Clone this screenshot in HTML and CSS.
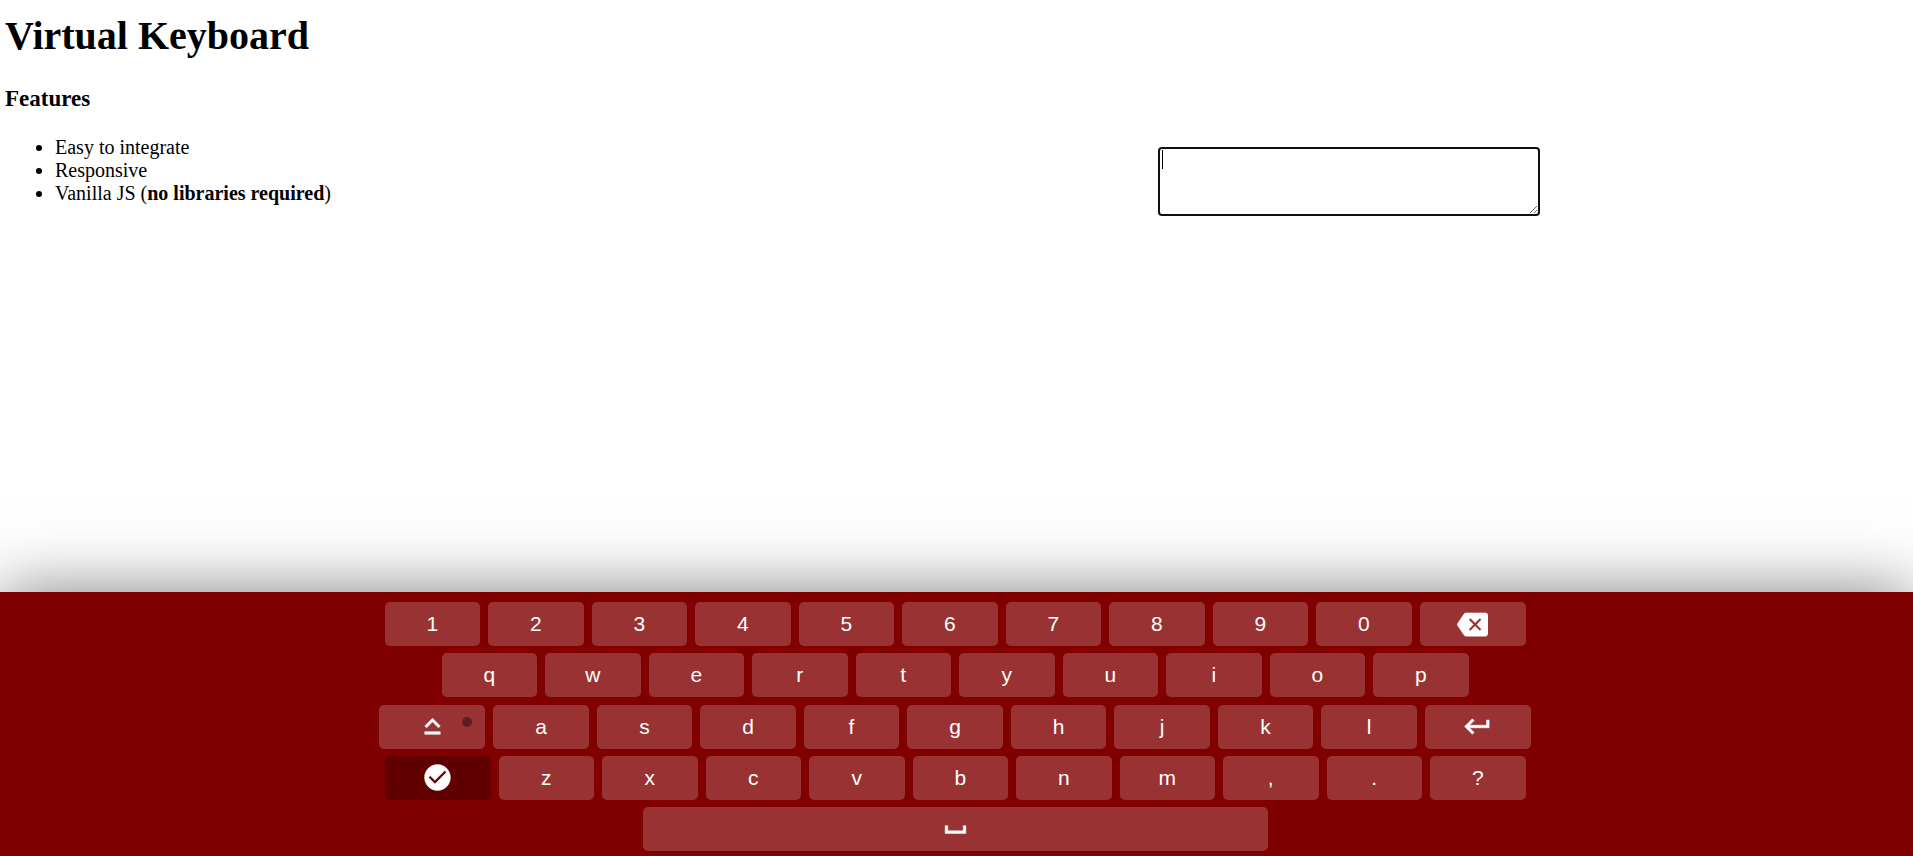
FILE: index.html
```html
<!DOCTYPE html>
<html lang="en">
<head>
<meta charset="utf-8">
<title>Virtual Keyboard</title>
<link rel="stylesheet" href="styles.css">
</head>
<body>
<header class="page-header">
  <h1 class="page-title">Virtual Keyboard</h1>
</header>
<main class="content">
  <section class="features">
    <h3 class="features-title">Features</h3>
    <ul class="features-list">
      <li>Easy to integrate</li>
      <li>Responsive</li>
      <li>Vanilla JS (<strong>no libraries required</strong>)</li>
    </ul>
  </section>
  <textarea class="entry" aria-label="Text input"></textarea>
</main>
<div class="keyboard">
  <div class="row">
    <button type="button" class="key">1</button>
    <button type="button" class="key">2</button>
    <button type="button" class="key">3</button>
    <button type="button" class="key">4</button>
    <button type="button" class="key">5</button>
    <button type="button" class="key">6</button>
    <button type="button" class="key">7</button>
    <button type="button" class="key">8</button>
    <button type="button" class="key">9</button>
    <button type="button" class="key">0</button>
    <button type="button" class="key key-wide" aria-label="Backspace"><svg class="icon" viewBox="0 0 24 24" stroke="currentColor" stroke-width="0.4"><path d="M22 3H7c-.69 0-1.23.35-1.59.88L0 12l5.410 8.110c.36.53.9.89 1.590.89h15c1.100 0 2-.9 2-2V5c0-1.100-.9-2-2-2zm-3 12.590L17.590 17 14 13.410 10.410 17 9 15.590 12.590 12 9 8.410 10.410 7 14 10.590 17.590 7 19 8.410 15.410 12 19 15.590z"/></svg></button>
  </div>
  <div class="row">
    <button type="button" class="key">q</button>
    <button type="button" class="key">w</button>
    <button type="button" class="key">e</button>
    <button type="button" class="key">r</button>
    <button type="button" class="key">t</button>
    <button type="button" class="key">y</button>
    <button type="button" class="key">u</button>
    <button type="button" class="key">i</button>
    <button type="button" class="key">o</button>
    <button type="button" class="key">p</button>
  </div>
  <div class="row">
    <button type="button" class="key key-wide key-toggle" aria-label="Caps lock"><svg class="icon" viewBox="0 0 24 24" stroke="currentColor" stroke-width="0.4"><path d="M12 8.410L16.590 13 18 11.590l-6-6-6 6L7.410 13 12 8.410zM6 18h12v-2H6v2z"/></svg></button>
    <button type="button" class="key">a</button>
    <button type="button" class="key">s</button>
    <button type="button" class="key">d</button>
    <button type="button" class="key">f</button>
    <button type="button" class="key">g</button>
    <button type="button" class="key">h</button>
    <button type="button" class="key">j</button>
    <button type="button" class="key">k</button>
    <button type="button" class="key">l</button>
    <button type="button" class="key key-wide" aria-label="Enter"><svg class="icon" viewBox="0 0 24 24" stroke="currentColor" stroke-width="0.4"><path d="M19 7v4H5.830l3.580-3.590L8 6l-6 6 6 6 1.410-1.410L5.830 13H21V7z"/></svg></button>
  </div>
  <div class="row">
    <button type="button" class="key key-wide key-dark" aria-label="Done"><svg class="icon" viewBox="0 0 24 24" stroke="currentColor" stroke-width="0.4"><path d="M12 2C6.480 2 2 6.480 2 12s4.480 10 10 10 10-4.480 10-10S17.520 2 12 2zm-2 15l-5-5 1.410-1.410L10 14.170l7.590-7.590L19 8l-9 9z"/></svg></button>
    <button type="button" class="key">z</button>
    <button type="button" class="key">x</button>
    <button type="button" class="key">c</button>
    <button type="button" class="key">v</button>
    <button type="button" class="key">b</button>
    <button type="button" class="key">n</button>
    <button type="button" class="key">m</button>
    <button type="button" class="key">,</button>
    <button type="button" class="key">.</button>
    <button type="button" class="key">?</button>
  </div>
  <div class="row">
    <button type="button" class="key key-space" aria-label="Space"><svg class="icon" viewBox="0 0 24 24" stroke="currentColor" stroke-width="0.4"><path d="M18 9v4H6V9H4v6h16V9z"/></svg></button>
  </div>
</div>
</body>
</html>
```
FILE: styles.css
```css
* {
  box-sizing: border-box;
}

body {
  display: flex;
  flex-direction: column;
  min-height: 100vh;
  margin: 0;
  font: 20px/23px "Liberation Serif", "Times New Roman", serif;
  color: #000;
  background: #fff;
}

.page-header {
  padding: 13px 5px 0;
}

.page-title {
  margin: 0;
  font-size: 40px;
  line-height: 46px;
}

.content {
  display: flex;
  align-items: flex-start;
  padding: 26px 0 20px 5px;
}

.features {
  flex: 1;
}

.features-title {
  margin: 0 0 24px;
  font-size: 23px;
  line-height: 27px;
}

.features-list {
  margin: 0;
  padding-left: 50px;
}

/* The gradient draws the insertion caret at the first line. */
.entry {
  width: 20%;
  height: 69px;
  margin: 62px 373px 0 0;
  padding: 2px;
  font: 17px "Liberation Mono", monospace;
  border: 2px solid #101010;
  border-radius: 4px;
  outline: none;
  background: linear-gradient(#000, #000) 2px 1px / 1px 19px no-repeat #fff;
}

.keyboard {
  display: flex;
  flex-direction: column;
  justify-content: space-between;
  gap: 7px;
  min-height: 264px;
  margin-top: auto;
  padding: 10px 3px 5px 0;
  background: #800000;
  box-shadow: 0 0 63px rgba(0, 0, 0, 0.5);
}

.row {
  display: flex;
  justify-content: center;
  gap: 8px;
}

.key {
  position: relative;
  display: flex;
  align-items: center;
  justify-content: center;
  width: 5%;
  height: 44px;
  padding: 0;
  border: 0;
  border-radius: 5px;
  font: 21px "Liberation Sans", Arial, sans-serif;
  color: #fff;
  background: rgba(255, 255, 255, 0.2);
  cursor: pointer;
}

.key-wide {
  width: 106px;
}

.key-space {
  width: 625px;
}

.key-dark {
  background: rgba(0, 0, 0, 0.25);
}

.key-toggle::after {
  content: "";
  position: absolute;
  top: 12px;
  right: 13px;
  width: 10px;
  height: 10px;
  border-radius: 50%;
  background: rgba(0, 0, 0, 0.4);
}

.icon {
  width: 31px;
  height: 31px;
  fill: currentColor;
}
```
